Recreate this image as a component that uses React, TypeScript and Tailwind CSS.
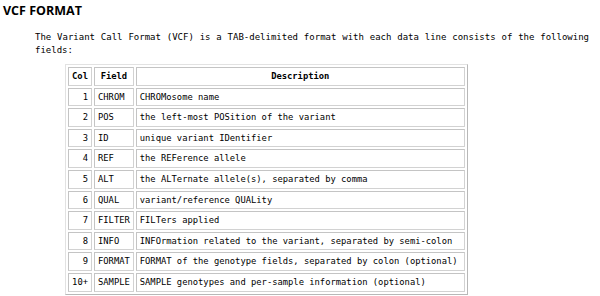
import React from 'react';

const rows: [string, string, string][] = [
  ['1', 'CHROM', 'CHROMosome name'],
  ['2', 'POS', 'the left-most POSition of the variant'],
  ['3', 'ID', 'unique variant IDentifier'],
  ['4', 'REF', 'the REFerence allele'],
  ['5', 'ALT', 'the ALTernate allele(s), separated by comma'],
  ['6', 'QUAL', 'variant/reference QUALity'],
  ['7', 'FILTER', 'FILTers applied'],
  ['8', 'INFO', 'INFOrmation related to the variant, separated by semi-colon'],
  ['9', 'FORMAT', 'FORMAT of the genotype fields, separated by colon (optional)'],
  ['10+', 'SAMPLE', 'SAMPLE genotypes and per-sample information (optional)'],
];

const cell = 'border border-[#d2d2d2] border-t-[#c4c4c4] border-l-[#c4c4c4] px-[3px] py-[2px] leading-[12.6px] whitespace-nowrap';

export default function App() {
  return (
    <div className="w-[600px] h-[296px] bg-white text-black overflow-hidden">
      <h2 className="pl-[3px] pt-[2px] text-[12.5px] leading-[18px] font-bold font-['Open_Sans',sans-serif]">
        VCF FORMAT
      </h2>

      <p className="ml-[35px] mr-[11px] mt-[11px] text-[9px] leading-[13px] text-justify font-['DejaVu_Sans_Mono',monospace]">
        The Variant Call Format (VCF) is a TAB-delimited format with each data line consists of the following fields:
      </p>

      <table className="ml-[65px] mt-[7px] border-separate border-spacing-[2px] border border-[#e2e2e2] border-r-[#b8b8b8] border-b-[#b8b8b8] text-[8.8px] font-['DejaVu_Sans_Mono',monospace]">
        <thead>
          <tr>
            <th className={`${cell} w-[24px] text-center`}>Col</th>
            <th className={`${cell} w-[39px] text-center`}>Field</th>
            <th className={`${cell} w-[329px] text-center`}>Description</th>
          </tr>
        </thead>
        <tbody>
          {rows.map(([col, field, desc]) => (
            <tr key={col}>
              <td className={`${cell} text-right`}>{col}</td>
              <td className={`${cell} text-left`}>{field}</td>
              <td className={`${cell} text-left`}>{desc}</td>
            </tr>
          ))}
        </tbody>
      </table>
    </div>
  );
}
